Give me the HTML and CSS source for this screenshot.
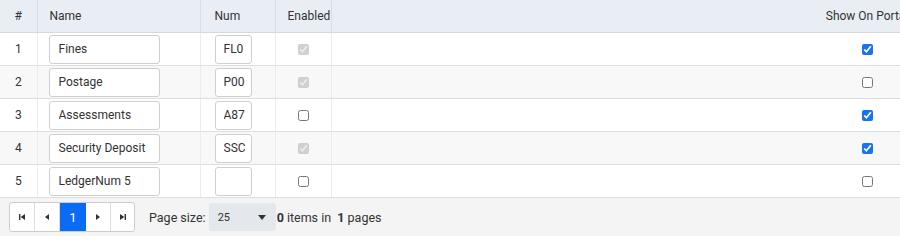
FILE: index.html
```html
<!DOCTYPE html>
<html lang="en">
<head>
    <meta charset="UTF-8">
    <title>Ledger Numbers</title>
    <link rel="stylesheet" href="styles.css">
</head>
<body>

<div class="grid-wrap">
    <table class="grid">
        <colgroup>
            <col class="col-idx">
            <col class="col-name">
            <col class="col-num">
            <col class="col-enabled">
            <col class="col-portal">
        </colgroup>
        <thead>
            <tr>
                <th class="center">#</th>
                <th>Name</th>
                <th>Num</th>
                <th>Enabled</th>
                <th class="center">Show On Portal</th>
            </tr>
        </thead>
        <tbody>
            <tr>
                <td class="center">1</td>
                <td><input class="txt txt-name" type="text" value="Fines"></td>
                <td><input class="txt txt-num" type="text" value="FL0"></td>
                <td class="center"><input class="chk" type="checkbox" checked disabled></td>
                <td class="center"><input class="chk" type="checkbox" checked></td>
            </tr>
            <tr class="alt">
                <td class="center">2</td>
                <td><input class="txt txt-name" type="text" value="Postage"></td>
                <td><input class="txt txt-num" type="text" value="P0001"></td>
                <td class="center"><input class="chk" type="checkbox" checked disabled></td>
                <td class="center"><input class="chk" type="checkbox"></td>
            </tr>
            <tr>
                <td class="center">3</td>
                <td><input class="txt txt-name" type="text" value="Assessments"></td>
                <td><input class="txt txt-num" type="text" value="A87"></td>
                <td class="center"><input class="chk" type="checkbox"></td>
                <td class="center"><input class="chk" type="checkbox" checked></td>
            </tr>
            <tr class="alt">
                <td class="center">4</td>
                <td><input class="txt txt-name" type="text" value="Security Deposit"></td>
                <td><input class="txt txt-num" type="text" value="SSC1"></td>
                <td class="center"><input class="chk" type="checkbox" checked disabled></td>
                <td class="center"><input class="chk" type="checkbox" checked></td>
            </tr>
            <tr>
                <td class="center">5</td>
                <td><input class="txt txt-name" type="text" value="LedgerNum 5"></td>
                <td><input class="txt txt-num" type="text" value=""></td>
                <td class="center"><input class="chk" type="checkbox"></td>
                <td class="center"><input class="chk" type="checkbox"></td>
            </tr>
        </tbody>
    </table>

    <div class="pager">
        <div class="pager-nav">
            <a class="pg-btn" href="#"><svg width="8" height="8" viewBox="0 0 8 8"><rect x="1" y="1" width="1.4" height="6" fill="#333"/><path d="M7 1 L2.6 4 L7 7 Z" fill="#333"/></svg></a>
            <a class="pg-btn" href="#"><svg width="8" height="8" viewBox="0 0 8 8"><path d="M6 1 L2 4 L6 7 Z" fill="#333"/></svg></a>
            <a class="pg-btn active" href="#">1</a>
            <a class="pg-btn" href="#"><svg width="8" height="8" viewBox="0 0 8 8"><path d="M2 1 L6 4 L2 7 Z" fill="#333"/></svg></a>
            <a class="pg-btn" href="#"><svg width="8" height="8" viewBox="0 0 8 8"><path d="M1 1 L5.4 4 L1 7 Z" fill="#333"/><rect x="5.6" y="1" width="1.4" height="6" fill="#333"/></svg></a>
        </div>
        <span class="pg-label">Page size:</span>
        <div class="pg-size">
            <span>25</span>
            <svg width="8" height="5" viewBox="0 0 8 5"><path d="M0 0 L8 0 L4 5 Z" fill="#333"/></svg>
        </div>
        <span class="pg-info"><b>0</b> items in &nbsp;<b>1</b> pages</span>
    </div>
</div>

</body>
</html>
```

FILE: styles.css
```css
body { margin: 0; font-family: Roboto, "Liberation Sans", sans-serif; font-size: 12px; color: #333; background: #fff; }
.grid-wrap { width: 900px; overflow: hidden; }
.grid { width: 1403px; border-collapse: collapse; table-layout: fixed; }
.col-idx { width: 37px; }
.col-name { width: 163px; }
.col-num { width: 75px; }
.col-enabled { width: 56px; }
.col-portal { width: 1072px; }

.grid th { height: 32px; padding: 0 12px; text-align: left; font-weight: normal; background: #e9eef5; border-right: 1px solid #d9dee6; border-bottom: 1px solid #d5d9df; white-space: nowrap; }
.grid td { height: 32px; padding: 0 12px 0 11px; border-right: 1px solid #ececec; border-bottom: 1px solid #dedede; white-space: nowrap; }
.grid th.center, .grid td.center { text-align: center; padding: 0; }
.grid tr.alt td { background: #f8f8f8; }
.grid tr td:nth-child(3), .grid tr th:nth-child(3) { padding-left: 14px; }

.txt { box-sizing: border-box; height: 29px; padding: 0 9px; border: 1px solid #cfcfcf; border-radius: 3px; background: #fff; font-family: inherit; font-size: 12px; color: #333; display: block; outline: none; }
.txt-name { width: 111px; }
.txt-num { width: 37px; padding: 0 6px 0 8px; }
.chk { width: 11px; height: 11px; margin: 0; vertical-align: middle; accent-color: #1a73e8; }

.pager { display: flex; align-items: center; height: 38px; padding: 0 9px; background: #f4f4f4; }
.pager-nav { display: flex; height: 28px; border: 1px solid #ccc; border-radius: 3px; overflow: hidden; background: #fff; }
.pg-btn { display: flex; align-items: center; justify-content: center; box-sizing: border-box; width: 25px; border-right: 1px solid #ddd; color: #333; text-decoration: none; font-size: 13px; }
.pg-btn:last-child { border-right: none; width: 23px; }
.pg-btn.active { background: #0a6cf5; color: #fff; width: 26px; border-right: none; }
.pg-label { margin-left: 14px; font-size: 12.5px; }
.pg-size { display: flex; align-items: center; justify-content: space-between; box-sizing: border-box; width: 67px; height: 28px; margin-left: 3px; padding: 0 10px 0 9px; background: #e4e7eb; border-radius: 3px; font-size: 11px; }
.pg-info { margin-left: 1px; font-size: 12.5px; }
```
